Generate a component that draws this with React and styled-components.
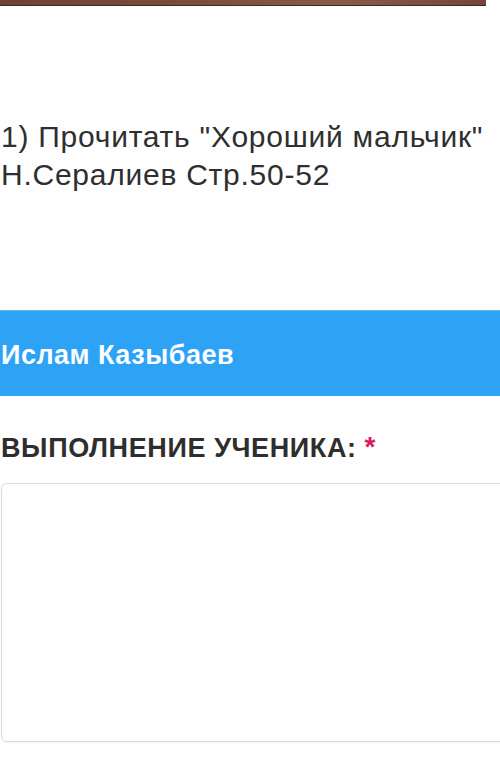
import React from 'react';
import styled, { createGlobalStyle } from "styled-components";

const GlobalStyle = createGlobalStyle`
  html, body {
    margin: 0;
    padding: 0;
    background: #fefefe;
    overflow: hidden;
  }
  body {
    font-family: "Liberation Sans", Arial, Helvetica, sans-serif;
  }
`

const Page = styled.div`
  width: 500px;
  height: 772px;
  display: flex;
  flex-direction: column;
  overflow: hidden;
`

const TopBar = styled.div`
  width: 486px;
  height: 5px;
  background: linear-gradient(90deg, #6e4232 0%, #7d4c3a 40%, #8a5a48 70%, #74463a 100%);
  border-bottom: 1.5px solid #3e2a22;
  flex-shrink: 0;
`

const Task = styled.p`
  margin: 112px 0 0 0;
  padding-left: 1px;
  font-size: 30px;
  letter-spacing: 0.75px;
  line-height: 38px;
  color: #2f2f2f;
  white-space: nowrap;
`

const StudentBar = styled.div`
  margin-top: 116px;
  height: 86px;
  flex-shrink: 0;
  background: #2ea3f6;
  display: flex;
  align-items: center;
  padding-left: 1px;
  border-top: 1px solid #5dbaf5;
  box-sizing: border-box;
`

const StudentName = styled.h2`
  margin: 0;
  padding-top: 4px;
  font-size: 27px;
  letter-spacing: 0.5px;
  font-weight: 700;
  color: #fbfdff;
`

const Label = styled.h3`
  margin: 37px 0 0 0;
  padding-left: 1px;
  font-size: 27px;
  line-height: 31px;
  letter-spacing: 0.6px;
  font-weight: 700;
  color: #2e2e2e;
  display: flex;
  align-items: flex-start;
  gap: 8px;
`

const Required = styled.span`
  color: #d8195e;
  font-size: 28px;
  line-height: 1;
  margin-top: 0;
`

const Answer = styled.textarea`
  margin-top: 19px;
  margin-left: 1px;
  width: 520px;
  height: 259px;
  flex-shrink: 0;
  box-sizing: border-box;
  border: 1.5px solid #dcdcdc;
  border-radius: 6px;
  background: #fefefe;
  resize: none;
  outline: none;
  box-shadow: 0 1px 2px rgba(0, 0, 0, 0.04);
`

const App = () => {
    return (
        <Page>
            <GlobalStyle/>
            <TopBar/>
            <Task>
                1) Прочитать "Хороший мальчик"<br/>
                Н.Сералиев Стр.50-52
            </Task>
            <StudentBar>
                <StudentName>Ислам Казыбаев</StudentName>
            </StudentBar>
            <Label>ВЫПОЛНЕНИЕ УЧЕНИКА: <Required>*</Required></Label>
            <Answer/>
        </Page>
    );
};

export default App;
